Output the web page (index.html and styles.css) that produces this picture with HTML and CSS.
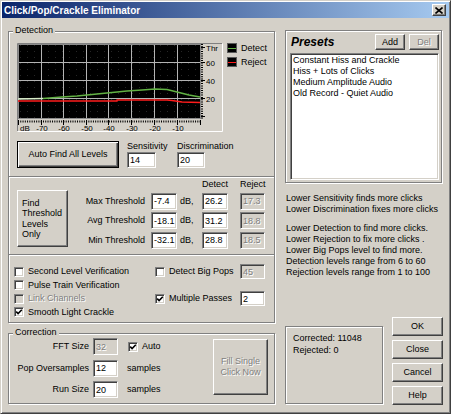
FILE: index.html
```html
<!DOCTYPE html>
<html lang="en">
<head>
    <meta charset="UTF-8">
    <title>Click/Pop/Crackle Eliminator</title>
    <link rel="stylesheet" href="styles.css">
</head>
<body>
<div class="window">
    <div class="titlebar">
        <span class="title">Click/Pop/Crackle Eliminator</span>
        <button class="close-btn" title="Close">
            <svg width="8" height="7" viewBox="0 0 8 7"><path d="M0.5 0.5 L7.5 6.5 M7.5 0.5 L0.5 6.5" stroke="#000" stroke-width="1.6" fill="none"/></svg>
        </button>
    </div>

    <div class="client">
        <div class="left-col">
            <!-- Detection -->
            <div class="group detection">
                <span class="group-title">Detection</span>

                <div class="graph-section">
                    <div class="graph-row">
                        <svg class="graph" width="206" height="89" viewBox="0 0 206 89">
                            <defs>
                                <pattern id="dots" width="7" height="6" patternUnits="userSpaceOnUse">
                                    <rect x="3" y="2" width="1" height="1" fill="#262626"/>
                                </pattern>
                            </defs>
                            <rect x="0" y="0" width="206" height="89" fill="#d4d0c8"/>
                            <path d="M0.5 88 V0.5 H205" stroke="#808080" fill="none"/>
                            <path d="M0.5 88.5 H205.5 V0.5" stroke="#ffffff" fill="none"/>
                            <rect x="1" y="1" width="183" height="75" fill="#000"/>
                            <rect x="1" y="1" width="183" height="75" fill="url(#dots)"/>
                            <g stroke="#b4b4b4" stroke-width="1">
                                <path d="M24.5 1 V76 M46.5 1 V76 M69.5 1 V76 M91.5 1 V76 M114.5 1 V76 M137.5 1 V76 M160.5 1 V76"/>
                                <path d="M1 19.5 H184 M1 37.5 H184 M1 55.5 H184"/>
                            </g>
                            <rect x="1.5" y="1.5" width="182" height="74" fill="none" stroke="#8c8c8c"/>
                            <!-- curves -->
                            <polyline points="1,56 26,55.5" fill="none" stroke="#d8ecc8" stroke-width="1.4"/>
                            <polyline points="26,55.5 45,54 60,53 75,51.5 95,49.5 110,48 125,47 138,46 150,46.5 160,49 172,52 183,54" fill="none" stroke="#62b244" stroke-width="1.4"/>
                            <polyline points="1,58 100,58 100,57 150,57 155,57.5 165,59 183,59.5" fill="none" stroke="#ff1c1c" stroke-width="1.3"/>
                            <!-- right axis -->
                            <path d="M185 1 V76" stroke="#000" stroke-width="2" stroke-dasharray="1 1.3"/>
                            <path d="M184 4.5 H188 M184 19.5 H188 M184 37.5 H188 M184 55.5 H188 M184 73.5 H188" stroke="#000"/>
                            <g font-family="Liberation Sans, Arial, sans-serif" font-size="8" fill="#000">
                                <text x="189" y="8">Thr</text>
                                <text x="189" y="22.5">60</text>
                                <text x="189" y="40.5">40</text>
                                <text x="189" y="58.5">20</text>
                            </g>
                            <!-- bottom axis -->
                            <path d="M1 78.5 H184" stroke="#000" stroke-width="2" stroke-dasharray="1 1.27"/>
                            <path d="M1.5 77 V82 M24.5 77 V82 M46.5 77 V82 M69.5 77 V82 M91.5 77 V82 M114.5 77 V82 M137.5 77 V82 M160.5 77 V82 M183.5 77 V82" stroke="#000"/>
                            <g font-family="Liberation Sans, Arial, sans-serif" font-size="8" fill="#000" text-anchor="middle">
                                <text x="8" y="87.5">dB</text>
                                <text x="25" y="87.5">-70</text>
                                <text x="47" y="87.5">-60</text>
                                <text x="70" y="87.5">-50</text>
                                <text x="92" y="87.5">-40</text>
                                <text x="115" y="87.5">-30</text>
                                <text x="138" y="87.5">-20</text>
                                <text x="161" y="87.5">-10</text>
                            </g>
                        </svg>
                        <div class="legend">
                            <div class="legend-item"><span class="swatch"><span class="swatch-line detect-line"></span></span>Detect</div>
                            <div class="legend-item"><span class="swatch"><span class="swatch-line reject-line"></span></span>Reject</div>
                        </div>
                    </div>

                    <div class="auto-row">
                        <button class="btn default-btn auto-btn">Auto Find All Levels</button>
                        <div class="field sens-field">
                            <label for="sens">Sensitivity</label>
                            <input class="edit" id="sens" type="text" value="14" style="width: 29px">
                        </div>
                        <div class="field">
                            <label for="disc">Discrimination</label>
                            <input class="edit" id="disc" type="text" value="20" style="width: 28px">
                        </div>
                    </div>
                </div>

                <div class="thresh-section">
                    <button class="btn find-btn">Find<br>Threshold<br>Levels<br>Only</button>
                    <div class="thresh-grid">
                        <span></span><span></span><span></span>
                        <span class="col-head">Detect</span>
                        <span class="col-head reject-head">Reject</span>

                        <span class="row-label">Max Threshold</span>
                        <input class="edit" type="text" value="-7.4">
                        <span class="unit">dB,</span>
                        <input class="edit" type="text" value="26.2">
                        <input class="edit off reject-box" type="text" value="17.3" disabled>

                        <span class="row-label">Avg Threshold</span>
                        <input class="edit" type="text" value="-18.1">
                        <span class="unit">dB,</span>
                        <input class="edit" type="text" value="31.2">
                        <input class="edit off reject-box" type="text" value="18.8" disabled>

                        <span class="row-label">Min Threshold</span>
                        <input class="edit" type="text" value="-32.1">
                        <span class="unit">dB,</span>
                        <input class="edit" type="text" value="28.8">
                        <input class="edit off reject-box" type="text" value="18.5" disabled>
                    </div>
                </div>

                <div class="opts-section">
                    <div class="opts-grid">
                        <div class="check-item" style="grid-area: 1 / 1"><span class="check"></span>Second Level Verification</div>
                        <div class="check-item" style="grid-area: 2 / 1"><span class="check"></span>Pulse Train Verification</div>
                        <div class="check-item disabled" style="grid-area: 3 / 1"><span class="check off"></span>Link Channels</div>
                        <div class="check-item" style="grid-area: 4 / 1"><span class="check"><svg width="8" height="8" viewBox="0 0 8 8"><path d="M1.2 3.6 L3.1 5.6 L6.8 1.8" stroke="#000" stroke-width="1.6" fill="none"/></svg></span>Smooth Light Crackle</div>
                        <div class="check-item" style="grid-area: 1 / 2"><span class="check"></span>Detect Big Pops<input class="edit off side-box" type="text" value="45" disabled></div>
                        <div class="check-item" style="grid-area: 3 / 2"><span class="check"><svg width="8" height="8" viewBox="0 0 8 8"><path d="M1.2 3.6 L3.1 5.6 L6.8 1.8" stroke="#000" stroke-width="1.6" fill="none"/></svg></span>Multiple Passes<input class="edit side-box" type="text" value="2"></div>
                    </div>
                </div>
            </div>

            <!-- Correction -->
            <div class="group correction">
                <span class="group-title">Correction</span>
                <div class="corr-grid">
                    <span class="row-label">FFT Size</span>
                    <input class="edit off" type="text" value="32" disabled>
                    <div class="check-item auto-check"><span class="check"><svg width="8" height="8" viewBox="0 0 8 8"><path d="M1.2 3.6 L3.1 5.6 L6.8 1.8" stroke="#000" stroke-width="1.6" fill="none"/></svg></span>Auto</div>

                    <span class="row-label">Pop Oversamples</span>
                    <input class="edit" type="text" value="12">
                    <span class="unit-text">samples</span>

                    <span class="row-label">Run Size</span>
                    <input class="edit" type="text" value="20">
                    <span class="unit-text">samples</span>
                </div>
                <button class="btn fill-btn" disabled>Fill Single<br>Click Now</button>
            </div>
        </div>

        <div class="right-col">
            <div class="group presets">
                <div class="presets-head">
                    <span class="presets-title">Presets</span>
                    <button class="btn small-btn">Add</button>
                    <button class="btn small-btn" disabled>Del</button>
                </div>
                <div class="preset-list">
                    <div>Constant Hiss and Crackle</div>
                    <div>Hiss + Lots of Clicks</div>
                    <div>Medium Amplitude Audio</div>
                    <div>Old Record - Quiet Audio</div>
                </div>
            </div>

            <div class="hints">
                <p>Lower Sensitivity finds more clicks<br>Lower Discrimination fixes more clicks</p>
                <p>Lower Detection to find more clicks.<br>Lower Rejection to fix more clicks .<br>Lower Big Pops level to find more.<br>Detection levels range from 6 to 60<br>Rejection levels range from 1 to 100</p>
            </div>

            <div class="bottom-row">
                <div class="group stats">
                    Corrected: 11048<br>
                    Rejected: 0
                </div>
                <div class="dlg-buttons">
                    <button class="btn">OK</button>
                    <button class="btn">Close</button>
                    <button class="btn">Cancel</button>
                    <button class="btn">Help</button>
                </div>
            </div>
        </div>
    </div>
</div>
</body>
</html>
```

FILE: styles.css
```css
* {
    box-sizing: border-box;
}
body {
    margin: 0;
    background-color: #d4d0c8;
    font-family: "Liberation Sans", Arial, sans-serif;
    font-size: 9px;
    line-height: 11px;
    color: #000000;
}
.window {
    width: 451px;
    height: 414px;
    display: flex;
    flex-direction: column;
    padding: 1px;
    border: 1px solid;
    border-color: #d4d0c8 #404040 #404040 #d4d0c8;
    box-shadow: inset 1px 1px #ffffff, inset -1px -1px #808080;
}

/* title bar */
.titlebar {
    height: 16px;
    flex: none;
    display: flex;
    align-items: center;
    justify-content: space-between;
    padding: 0 3px 0 2px;
    background: linear-gradient(to right, #0a246a, #a6caf0);
}
.title {
    color: #ffffff;
    font-weight: bold;
    font-size: 10px;
}
.close-btn {
    width: 14px;
    height: 12px;
    padding: 0;
    display: flex;
    align-items: center;
    justify-content: center;
    background-color: #d4d0c8;
    border: 1px solid;
    border-color: #ffffff #404040 #404040 #ffffff;
    box-shadow: inset -1px -1px #808080;
}
.close-btn svg {
    display: block;
}

/* layout */
.client {
    flex: 1;
    display: flex;
    gap: 9px;
    padding: 12px 6px 7px 6px;
}
.left-col {
    width: 268px;
    display: flex;
    flex-direction: column;
    padding-top: 1px;
}
.right-col {
    width: 158px;
    display: flex;
    flex-direction: column;
}

/* etched group frame */
.group {
    position: relative;
    border: 1px solid #808080;
    box-shadow: inset 1px 1px #ffffff, 1px 1px #ffffff;
}
.group-title {
    position: absolute;
    top: -7px;
    left: 4px;
    padding: 0 2px;
    background-color: #d4d0c8;
}
.detection {
    width: 267px;
    height: 292px;
    display: flex;
    flex-direction: column;
}

/* generic controls */
.btn {
    font: inherit;
    color: #000000;
    padding: 0;
    background-color: #d4d0c8;
    border: 1px solid;
    border-color: #ffffff #404040 #404040 #ffffff;
    box-shadow: inset -1px -1px #808080;
    cursor: pointer;
}
.btn:disabled {
    color: #808080;
    text-shadow: 1px 1px #ffffff;
    cursor: default;
}
.default-btn {
    border: 1px solid #000000;
    box-shadow: inset 1px 1px #ffffff, inset -1px -1px #404040, inset -2px -2px #808080;
}
.edit {
    font: inherit;
    color: #000000;
    width: 26px;
    height: 17px;
    margin: 0;
    padding: 0 0 0 2px;
    background-color: #ffffff;
    border: 1px solid;
    border-color: #808080 #ffffff #ffffff #808080;
    box-shadow: inset 1px 1px #404040, inset -1px -1px #d4d0c8;
    outline: none;
}
.edit.off {
    background-color: #d4d0c8;
    color: #808080;
    text-shadow: 1px 1px #ffffff;
}
.check {
    width: 10px;
    height: 10px;
    flex: none;
    display: flex;
    align-items: center;
    justify-content: center;
    background-color: #ffffff;
    border: 1px solid;
    border-color: #808080 #ffffff #ffffff #808080;
    box-shadow: inset 1px 1px #404040, inset -1px -1px #d4d0c8;
}
.check svg {
    display: block;
}
.check.off {
    background-color: #d4d0c8;
}
.check-item {
    display: flex;
    align-items: center;
    gap: 4px;
    white-space: nowrap;
}
.check-item.disabled {
    color: #808080;
    text-shadow: 1px 1px #ffffff;
}

/* graph */
.graph-section {
    height: 144px;
    padding: 11px 0 0 8px;
}
.graph-row {
    display: flex;
    align-items: flex-start;
}
.graph {
    display: block;
}
.legend {
    margin-left: 4px;
    display: flex;
    flex-direction: column;
    gap: 4px;
}
.legend-item {
    display: flex;
    align-items: center;
    gap: 4px;
    height: 10px;
    line-height: 10px;
}
.swatch {
    width: 10px;
    height: 10px;
    display: flex;
    align-items: center;
    background-color: #000000;
    border: 1px solid #5a5a5a;
}
.swatch-line {
    display: block;
    width: 100%;
    height: 1px;
}
.detect-line {
    background-color: #62b244;
}
.reject-line {
    background-color: #ff1c1c;
}

.auto-row {
    margin-top: 9px;
    display: flex;
    align-items: flex-start;
}
.auto-btn {
    width: 102px;
    height: 27px;
}
.field {
    margin-left: 8px;
    display: flex;
    flex-direction: column;
}
.sens-field {
    width: 42px;
}
.field .edit {
    height: 16px;
}

/* thresholds */
.thresh-section {
    height: 78px;
    display: flex;
    align-items: flex-start;
    padding-left: 8px;
    border-top: 1px solid #808080;
    box-shadow: inset 0 1px #ffffff;
}
.find-btn {
    width: 51px;
    height: 57px;
    margin-top: 13px;
    padding-left: 4px;
    text-align: left;
    line-height: 10.5px;
}
.thresh-grid {
    margin: 2px 0 0 4px;
    display: grid;
    grid-template-columns: 79px 26px 25px 25px 38px;
    grid-template-rows: 11px 17px 17px 17px;
    row-gap: 2.5px;
    align-items: center;
}
.col-head {
    white-space: nowrap;
}
.reject-head {
    padding-left: 13px;
}
.row-label {
    text-align: right;
    padding-right: 6px;
    white-space: nowrap;
}
.unit {
    padding-left: 3px;
}
.thresh-grid .edit {
    width: 26px;
}
.thresh-grid .reject-box {
    width: 25px;
    justify-self: end;
}

/* options */
.opts-section {
    height: 68px;
    padding: 10px 0 0 5px;
    border-top: 1px solid #808080;
    box-shadow: inset 0 1px #ffffff;
}
.opts-grid {
    display: grid;
    grid-template-columns: 141px 110px;
    grid-template-rows: repeat(4, 13.5px);
}
.side-box {
    width: 25px;
    height: 15px;
    margin-left: auto;
}

/* correction */
.correction {
    width: 267px;
    height: 71px;
    margin-top: 10px;
    display: flex;
    align-items: flex-start;
    padding-top: 4px;
}
.corr-grid {
    display: grid;
    grid-template-columns: 84px 25px auto;
    grid-template-rows: repeat(3, 17px);
    row-gap: 4.5px;
    align-items: center;
}
.corr-grid .row-label {
    padding-right: 4px;
}
.corr-grid .edit {
    width: 25px;
}
.auto-check {
    padding-left: 10px;
}
.unit-text {
    padding-left: 9px;
}
.fill-btn {
    width: 55px;
    height: 56px;
    margin: 1px 6px 0 auto;
    line-height: 11px;
}

/* presets */
.presets {
    width: 157px;
    height: 153px;
    padding: 3px 2px 2px 4px;
}
.presets-head {
    height: 16px;
    display: flex;
    align-items: center;
    gap: 4px;
}
.presets-title {
    margin-left: 1px;
    margin-right: auto;
    font-size: 12px;
    font-weight: bold;
    font-style: italic;
}
.small-btn {
    width: 30px;
    height: 16px;
}
.preset-list {
    margin-top: 3px;
    height: 127px;
    padding: 1px 2px;
    background-color: #ffffff;
    border: 1px solid;
    border-color: #808080 #ffffff #ffffff #808080;
    box-shadow: inset 1px 1px #404040, inset -1px -1px #d4d0c8;
    white-space: nowrap;
}

.hints {
    margin-top: 9.5px;
    padding-left: 1px;
    white-space: nowrap;
}
.hints p {
    margin: 0;
}
.hints p + p {
    margin-top: 8px;
}

.bottom-row {
    margin-top: auto;
    display: flex;
    justify-content: space-between;
    align-items: flex-end;
}
.stats {
    width: 98px;
    height: 78px;
    margin-bottom: 1px;
    padding: 5px 0 0 7px;
    line-height: 12px;
}
.dlg-buttons {
    width: 51px;
    display: flex;
    flex-direction: column;
    gap: 4px;
}
.dlg-buttons .btn {
    height: 19px;
}
```
